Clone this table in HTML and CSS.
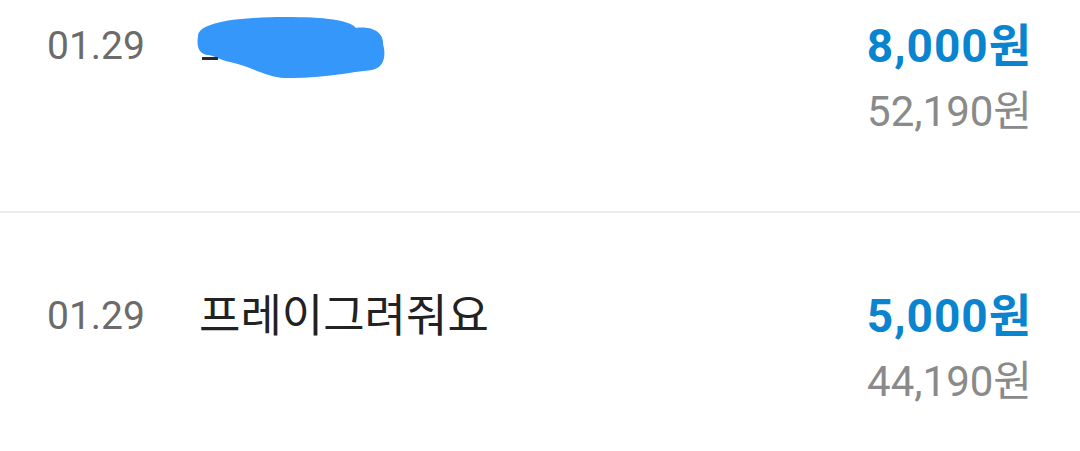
FILE: index.html
```html
<!DOCTYPE html>
<html lang="ko">

<head>
    <meta charset="UTF-8">
    <meta name="viewport" content="width=device-width, initial-scale=1.0">
    <title>거래 내역</title>
    <link rel="stylesheet" href="styles.css">
</head>

<body>
    <ul class="history">
        <li class="entry">
            <span class="entry-date">01.29</span>
            <span class="entry-title">
                <!-- name hidden with a marker scribble -->
                <svg class="scribble" width="200" height="70" viewBox="0 0 200 70" aria-hidden="true">
                    <path d="M 8 22 C 8 8, 50 3, 95 3 C 135 3, 160 6, 166 14 C 178 12, 194 16, 193 30 C 196 40, 195 54, 182 56 C 160 58, 130 65, 95 64 C 75 63, 60 52, 40 48 C 30 46, 26 42, 18 41 C 10 40, 6 34, 8 22 Z" fill="#3697fb" />
                    <rect x="12" y="43" width="16" height="3" fill="#2a2a2a" />
                </svg>
            </span>
            <span class="entry-amounts">
                <span class="amount">8,000원</span>
                <span class="balance">52,190원</span>
            </span>
        </li>
        <li class="entry">
            <span class="entry-date">01.29</span>
            <span class="entry-title">프레이그려줘요</span>
            <span class="entry-amounts">
                <span class="amount">5,000원</span>
                <span class="balance">44,190원</span>
            </span>
        </li>
    </ul>
</body>

</html>
```

FILE: styles.css
```css
body {
    margin: 0;
    background-color: #fff;
    font-family: Roboto, "Noto Sans CJK KR", sans-serif;
    overflow: hidden;
}

.history {
    list-style: none;
    margin: 0;
    padding: 0;
    /* list is scrolled a little, first row is cut at the top */
    margin-top: -57px;
}

.entry {
    display: flex;
    align-items: flex-start;
    height: 270px;
    padding: 75px 48px 0 47px;
    box-sizing: border-box;
    border-bottom: 2px solid #ebebeb;
}

.entry-date {
    width: 152px;
    flex-shrink: 0;
    font-size: 39px;
    line-height: 56px;
    color: #6b6b6b;
}

.entry-title {
    flex: 1;
    font-family: "Noto Sans CJK KR", sans-serif;
    font-size: 45px;
    line-height: 50px;
    color: #222;
}

.scribble {
    display: block;
    margin: -4px 0 0 -9px;
}

.entry-amounts {
    display: flex;
    flex-direction: column;
    align-items: flex-end;
}

.amount {
    font-size: 46px;
    font-weight: 700;
    line-height: 56px;
    letter-spacing: 1px;
    color: #0a84cf;
}

.balance {
    margin-top: 13px;
    font-size: 42px;
    line-height: 50px;
    color: #8a8a8a;
}
```
